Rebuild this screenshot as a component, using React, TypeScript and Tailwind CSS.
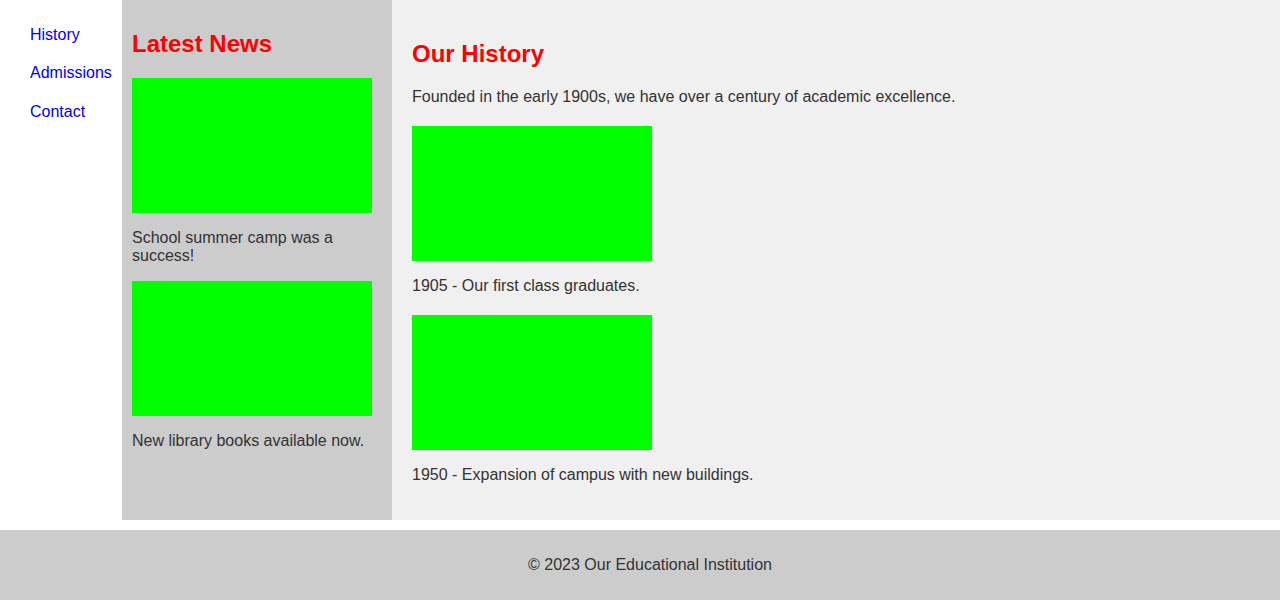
import React from 'react';

const navLinks = ['History', 'Admissions', 'Contact'];

const news = ['School summer camp was a success!', 'New library books available now.'];

const timeline = ['1905 - Our first class graduates.', '1950 - Expansion of campus with new buildings.'];

const App = () => {
  return (
    <div className="min-h-[600px] bg-white text-[16px] leading-[18.4px] text-[#333333]" style={{ fontFamily: '"Liberation Sans", Arial, sans-serif' }}>
      <div className="flex h-[520px]">
        <nav className="w-[122px] shrink-0 pt-[26px] pl-[30px]">
          <ul className="flex flex-col gap-[20px]">
            {navLinks.map((link) => (
              <li key={link}>
                <a href="#" className="text-[#0000ee]">
                  {link}
                </a>
              </li>
            ))}
          </ul>
        </nav>

        <aside className="w-[270px] shrink-0 bg-[#cccccc] p-[10px]">
          <h2 className="mt-[20px] mb-[20px] text-[24px] leading-[27.6px] font-bold text-[#ff0000]">Latest News</h2>
          {news.map((item) => (
            <div key={item}>
              <div className="h-[135px] w-[240px] bg-[#00ff00]"></div>
              <p className="my-[16px] w-[240px]">{item}</p>
            </div>
          ))}
        </aside>

        <main className="flex-1 bg-[#f0f0f0] p-[20px]">
          <h2 className="mt-[20px] mb-[20px] text-[24px] leading-[27.6px] font-bold text-[#ff0000]">Our History</h2>
          <p className="mb-[20px]">Founded in the early 1900s, we have over a century of academic excellence.</p>
          {timeline.map((item) => (
            <div key={item} className="mb-[20px]">
              <div className="h-[135px] w-[240px] bg-[#00ff00]"></div>
              <p className="mt-[16px]">{item}</p>
            </div>
          ))}
        </main>
      </div>

      <footer className="mt-[10px] flex h-[70px] items-center justify-center bg-[#cccccc] pl-[20px]">
        <p>© 2023 Our Educational Institution</p>
      </footer>
    </div>
  );
};

export default App;
